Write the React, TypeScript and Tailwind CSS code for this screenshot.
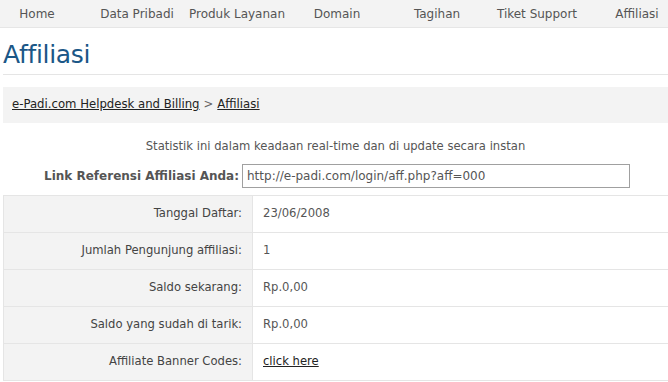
import React from "react";

const nav = ["Home", "Data Pribadi", "Produk Layanan", "Domain", "Tagihan", "Tiket Support", "Affiliasi"];

const rows: { label: string; value: React.ReactNode }[] = [
  { label: "Tanggal Daftar:", value: "23/06/2008" },
  { label: "Jumlah Pengunjung affiliasi:", value: "1" },
  { label: "Saldo sekarang:", value: "Rp.0,00" },
  { label: "Saldo yang sudah di tarik:", value: "Rp.0,00" },
  {
    label: "Affiliate Banner Codes:",
    value: <a className="text-[#222] underline">click here</a>,
  },
];

export default function App() {
  return (
    <div
      className="w-[668px] h-[382px] overflow-hidden bg-white text-[#555] text-[11.6px]"
      style={{ fontFamily: '"DejaVu Sans", Verdana, sans-serif' }}
    >
      <div className="h-[28px] bg-[#f3f3f3] border-b border-[#e6e6e6] flex items-center ml-[-13px] text-[12px]">
        {nav.map((n) => (
          <div key={n} className="w-[100px] shrink-0 text-center text-[#555]">
            {n}
          </div>
        ))}
      </div>
      <div className="pl-[3px]">
        <h1 className="text-[25px] tracking-[-0.3px] leading-[30px] text-[#1b5787] pt-[12px] pb-[4px] border-b border-[#e5e5e5]">
          Affiliasi
        </h1>
        <div className="mt-[12px] h-[36px] bg-[#f3f3f3] flex items-center pl-[9px] text-[#222] text-[11.7px]">
          <a className="underline">e-Padi.com Helpdesk and Billing</a>
          <span className="text-[#666] mx-[4px]">&gt;</span>
          <a className="underline">Affiliasi</a>
        </div>
        <div className="text-center mt-[15px] leading-[16px] text-[#555]">
          Statistik ini dalam keadaan real-time dan di update secara instan
        </div>
        <div className="flex items-center mt-[10px] h-[24px]">
          <div className="w-[239px] text-right font-bold text-[#555] pr-[3px] text-[12px]">Link Referensi Affiliasi Anda:</div>
          <div className="w-[388px] h-[24px] border border-[#a0a0a0] flex items-center pl-[4px] text-[#555] text-[12px]">
            http://e-padi.com/login/aff.php?aff=000
          </div>
        </div>
        <div className="mt-[7px] border-t border-[#e5e5e5]">
          {rows.map((r) => (
            <div key={r.label} className="flex h-[37px] border-b border-[#e5e5e5]">
              <div className="w-[250px] bg-[#f3f3f3] border-l border-r border-[#e5e5e5] flex items-center justify-end pr-[10px] text-[#444]">
                {r.label}
              </div>
              <div className="flex-1 flex items-center pl-[10px] text-[#555]">{r.value}</div>
            </div>
          ))}
        </div>
      </div>
    </div>
  );
}
